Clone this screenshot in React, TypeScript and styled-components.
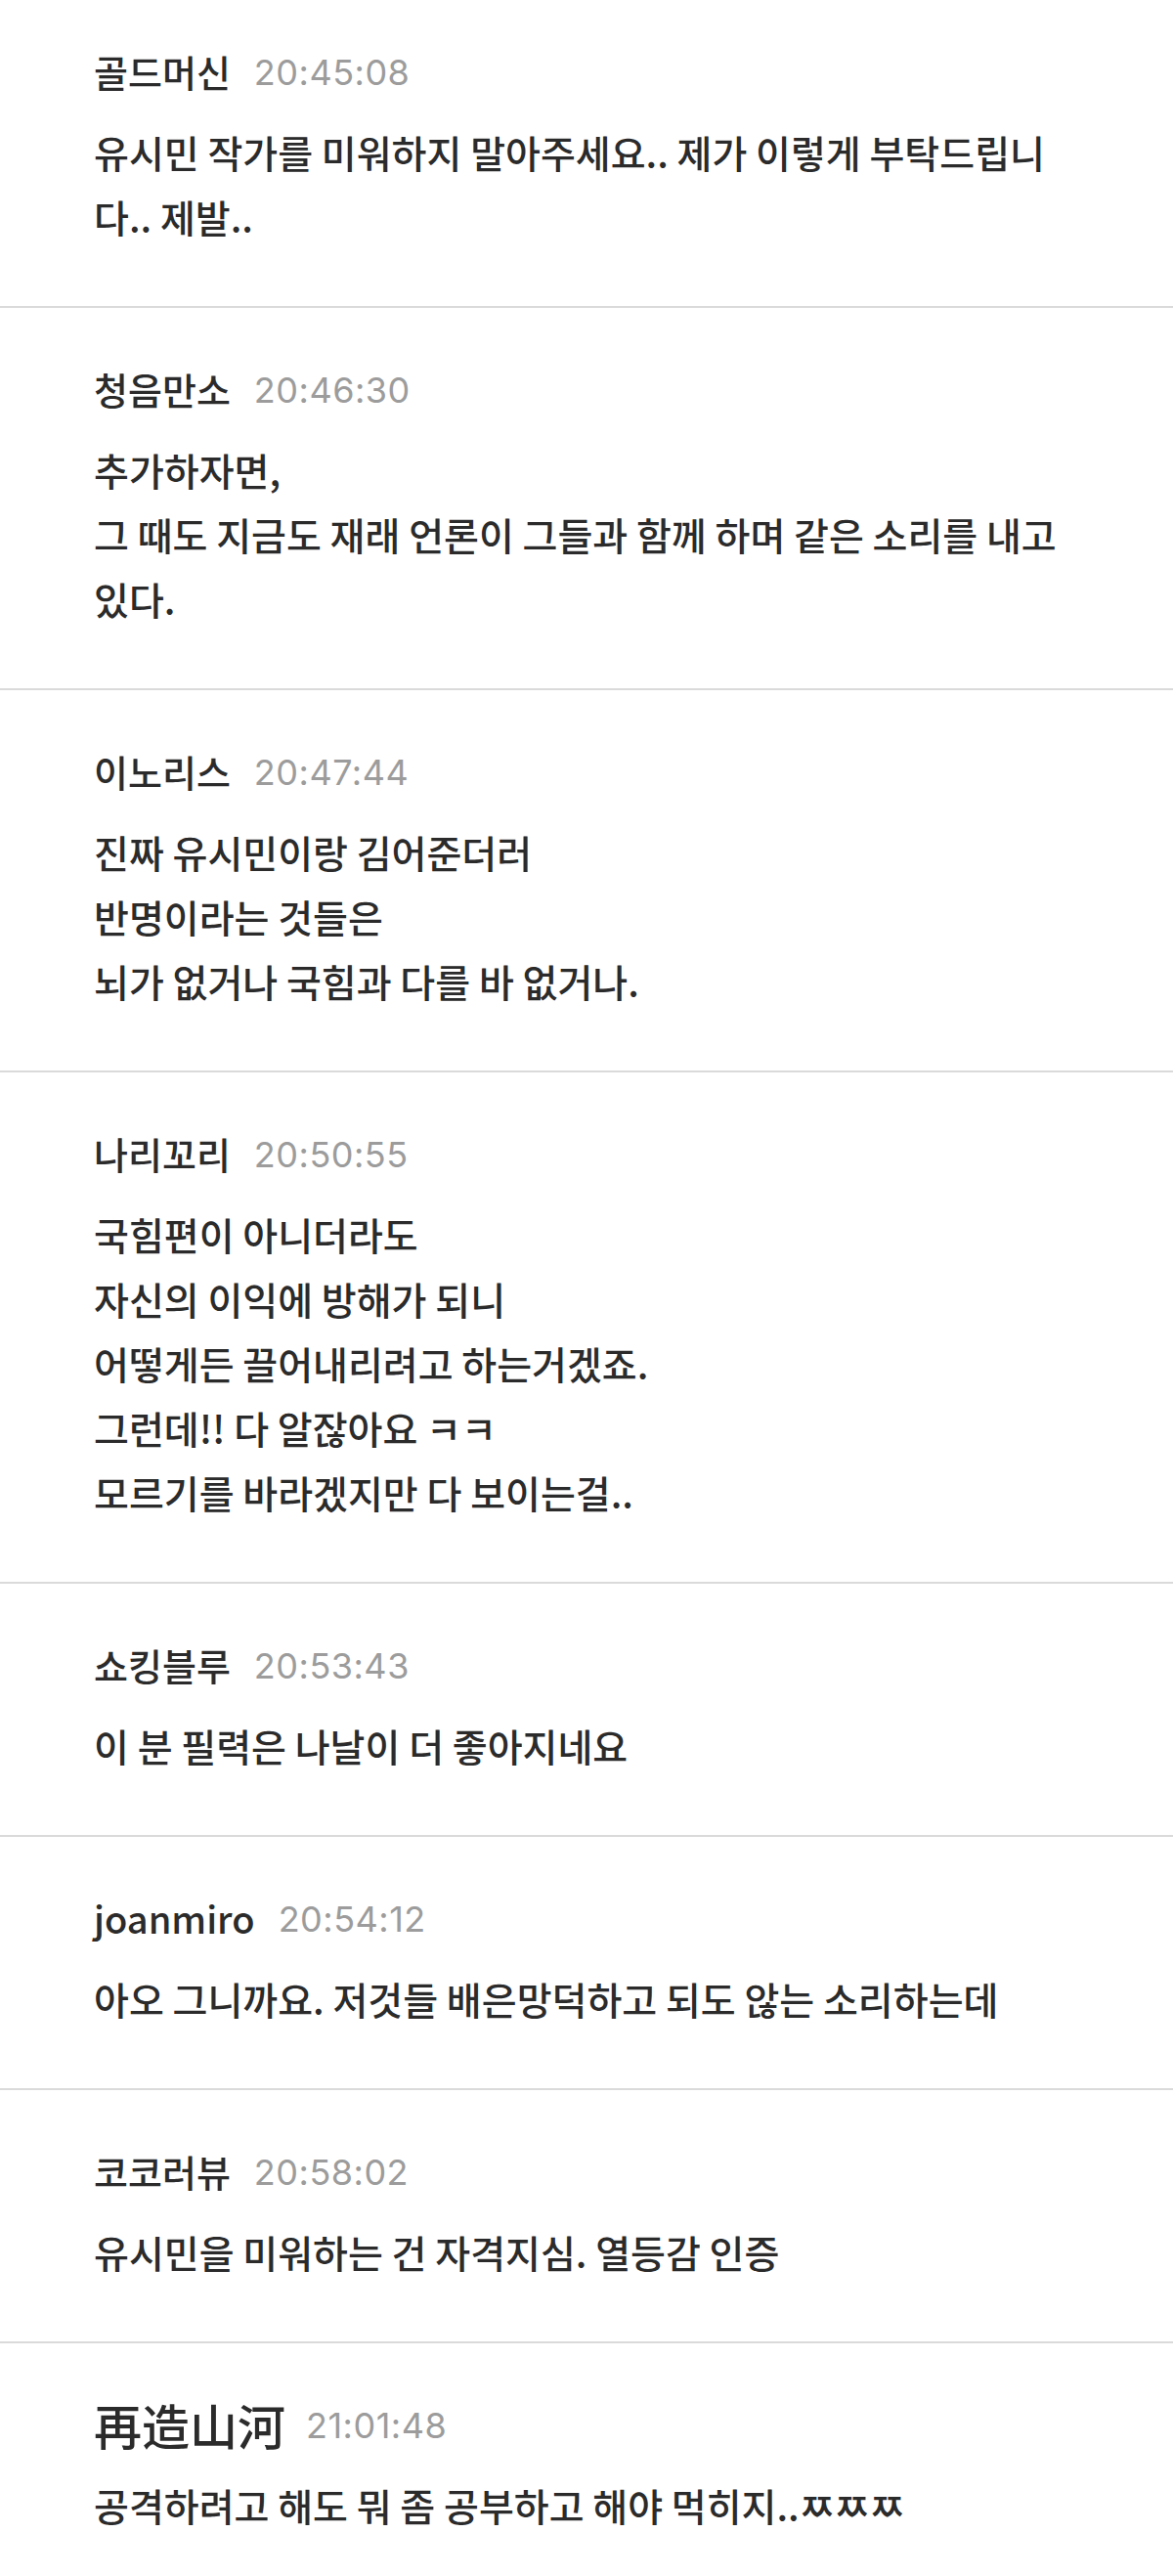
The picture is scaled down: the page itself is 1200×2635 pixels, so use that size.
import React from "react";
import styled, {createGlobalStyle} from "styled-components";

const TEXT_COLOR = "#2b2b2b";
const TIME_COLOR = "#9c9c9c";
const DIVIDER_COLOR = "#dadada";
const KR_FONT = `"Noto Sans CJK KR", "Noto Sans", sans-serif`;

const GlobalStyle = createGlobalStyle`
  html, body {
    margin: 0;
    padding: 0;
    background: #fff;
  }
  body {
    font-family: ${KR_FONT};
    color: ${TEXT_COLOR};
  }
`;

export const CommentList = styled.div`
  width: 1200px;
  display: flex;
  flex-direction: column;
  background: #fff;
`;

export const CommentItem = styled.div<{ $first?: boolean; $last?: boolean }>`
  display: flex;
  flex-direction: column;
  padding: 57px 100px 59px 96px;
  border-bottom: 2px solid ${DIVIDER_COLOR};

  ${({$first}) => $first && `
    padding-top: 47px;
  `}
  ${({$last}) => $last && `
    padding-bottom: 42px;
    border-bottom: none;
  `}
`;

export const CommentHeader = styled.div`
  display: flex;
  flex-direction: row;
  align-items: center;
  height: 50px;
  gap: 24px;
  margin-bottom: 25px;
`;

export const AuthorName = styled.span<{ $hanzi?: boolean }>`
  font-family: ${KR_FONT};
  font-size: 38px;
  font-weight: 500;
  color: ${TEXT_COLOR};
  white-space: nowrap;

  ${({$hanzi}) => $hanzi && `
    font-family: "Noto Sans CJK SC", "Noto Sans CJK KR", sans-serif;
    font-size: 49px;
    font-weight: 500;
    letter-spacing: 0;
    margin-right: -3px;
  `}
`;

export const PostTime = styled.span`
  font-family: Inter, "Liberation Sans", sans-serif;
  font-size: 36px;
  color: ${TIME_COLOR};
  letter-spacing: 0.5px;
  white-space: nowrap;
  padding-top: 4px;
`;

export const CommentBody = styled.p`
  margin: 0;
  font-family: ${KR_FONT};
  font-size: 39px;
  font-weight: 500;
  line-height: 66px;
  color: ${TEXT_COLOR};
  white-space: pre-line;
  word-break: normal;
`;

type Comment = {
    author: string;
    time: string;
    text: string;
    hanzi?: boolean;
};

const comments: Comment[] = [
    {
        author: "골드머신",
        time: "20:45:08",
        text: "유시민 작가를 미워하지 말아주세요.. 제가 이렇게 부탁드립니다.. 제발.."
    },
    {
        author: "청음만소",
        time: "20:46:30",
        text: "추가하자면,\n그 때도 지금도 재래 언론이 그들과 함께 하며 같은 소리를 내고 있다."
    },
    {
        author: "이노리스",
        time: "20:47:44",
        text: "진짜 유시민이랑 김어준더러\n반명이라는 것들은\n뇌가 없거나 국힘과 다를 바 없거나."
    },
    {
        author: "나리꼬리",
        time: "20:50:55",
        text: "국힘편이 아니더라도\n자신의 이익에 방해가 되니\n어떻게든 끌어내리려고 하는거겠죠.\n그런데!! 다 알잖아요 ㅋㅋ\n모르기를 바라겠지만 다 보이는걸.."
    },
    {
        author: "쇼킹블루",
        time: "20:53:43",
        text: "이 분 필력은 나날이 더 좋아지네요"
    },
    {
        author: "joanmiro",
        time: "20:54:12",
        text: "아오 그니까요. 저것들 배은망덕하고 되도 않는 소리하는데"
    },
    {
        author: "코코러뷰",
        time: "20:58:02",
        text: "유시민을 미워하는 건 자격지심. 열등감 인증"
    },
    {
        author: "再造山河",
        time: "21:01:48",
        text: "공격하려고 해도 뭐 좀 공부하고 해야 먹히지..ㅉㅉㅉ",
        hanzi: true
    }
];

export default function App() {
    return (
        <>
            <GlobalStyle/>
            <CommentList>
                {comments.map((c, i) => (
                    <CommentItem key={c.time} $first={i === 0} $last={i === comments.length - 1}>
                        <CommentHeader>
                            <AuthorName $hanzi={c.hanzi}>{c.author}</AuthorName>
                            <PostTime>{c.time}</PostTime>
                        </CommentHeader>
                        <CommentBody>{c.text}</CommentBody>
                    </CommentItem>
                ))}
            </CommentList>
        </>
    );
}
